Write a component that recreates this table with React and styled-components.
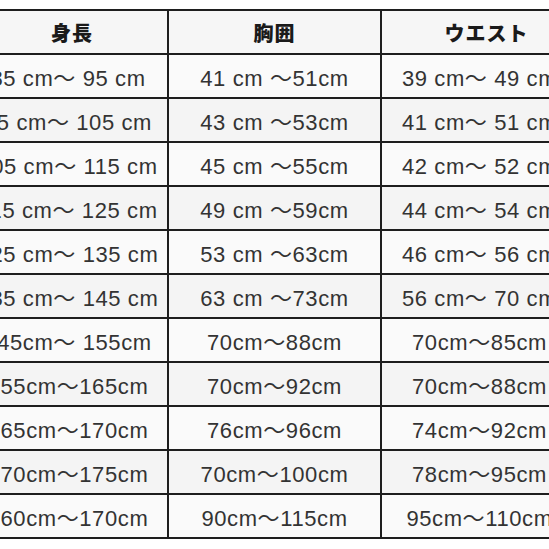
import React from 'react';
import styled, { createGlobalStyle } from 'styled-components';

const GlobalStyle = createGlobalStyle`
  html, body {
    margin: 0;
    padding: 0;
    background: #ffffff;
    overflow: hidden;
  }
`;

const headers = ['身長', '胸囲', 'ウエスト'];

const rows = [
  ['85 cm～ 95 cm', '41 cm ～51cm', '39 cm～ 49 cm'],
  ['95 cm～ 105 cm', '43 cm ～53cm', '41 cm～ 51 cm'],
  ['105 cm～ 115 cm', '45 cm ～55cm', '42 cm～ 52 cm'],
  ['115 cm～ 125 cm', '49 cm ～59cm', '44 cm～ 54 cm'],
  ['125 cm～ 135 cm', '53 cm ～63cm', '46 cm～ 56 cm'],
  ['135 cm～ 145 cm', '63 cm ～73cm', '56 cm～ 70 cm'],
  ['145cm～ 155cm', '70cm～88cm', '70cm～85cm'],
  ['155cm～165cm', '70cm～92cm', '70cm～88cm'],
  ['165cm～170cm', '76cm～96cm', '74cm～92cm'],
  ['170cm～175cm', '70cm～100cm', '78cm～95cm'],
  ['160cm～170cm', '90cm～115cm', '95cm～110cm'],
];

const Page = styled.div`
  width: 549px;
  height: 549px;
  padding-top: 9px;
  box-sizing: border-box;
  overflow: hidden;
`;

const Grid = styled.div`
  display: grid;
  grid-template-columns: 190px 211px 209px;
  grid-auto-rows: 42px;
  gap: 2px;
  padding: 2px;
  margin-left: -25px;
  width: max-content;
  background: #1e1e1e;
`;

const HeadCell = styled.div`
  display: flex;
  align-items: center;
  justify-content: center;
  background: #f6f6f6;
  color: #1a1a1a;
  font-family: "Noto Sans CJK JP", "Noto Sans", sans-serif;
  font-weight: 900;
  font-size: 20px;
  letter-spacing: 1px;
`;

const Cell = styled.div`
  display: flex;
  align-items: center;
  justify-content: center;
  padding-right: ${({ $shift }) => $shift}px;
  background: ${({ $shade }) => ($shade ? '#f4f4f4' : '#fafafa')};
  color: #333333;
  font-family: "Liberation Sans", Arial, "Noto Sans CJK JP", sans-serif;
  font-size: 22px;
  letter-spacing: 0.6px;
  white-space: pre;
`;

// nudges the text in the first and last columns to sit like the source
const shifts = [8, 0, 14];

export default function App() {
  return (
    <>
      <GlobalStyle />
      <Page>
        <Grid>
          {headers.map((h) => (
            <HeadCell key={h}>{h}</HeadCell>
          ))}
          {rows.map((row, i) =>
            row.map((text, j) => (
              <Cell key={`${i}-${j}`} $shade={i % 2 === 1} $shift={shifts[j]}>
                {text}
              </Cell>
            ))
          )}
        </Grid>
      </Page>
    </>
  );
}
